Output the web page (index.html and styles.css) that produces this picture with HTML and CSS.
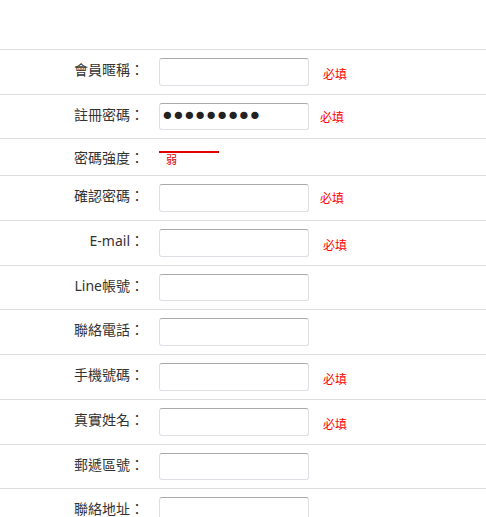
FILE: index.html
```html
<!DOCTYPE html>
<html lang="zh-Hant">
<head>
<meta charset="utf-8">
<title>會員註冊</title>
<link rel="stylesheet" href="styles.css">
</head>
<body>
<form class="form">
  <div class="row">
    <label class="label">會員暱稱：</label>
    <input class="field" type="text">
    <span class="note">必填</span>
  </div>
  <div class="row">
    <label class="label">註冊密碼：</label>
    <input class="field field-pass" type="password" value="123456789">
    <span class="note note-tight">必填</span>
  </div>
  <div class="row row-strength">
    <label class="label">密碼強度：</label>
    <div class="strength">
      <div class="strength-bar"></div>
      <span class="strength-text">弱</span>
    </div>
  </div>
  <div class="row">
    <label class="label">確認密碼：</label>
    <input class="field" type="password">
    <span class="note note-tight">必填</span>
  </div>
  <div class="row">
    <label class="label">E-mail：</label>
    <input class="field" type="text">
    <span class="note">必填</span>
  </div>
  <div class="row">
    <label class="label">Line帳號：</label>
    <input class="field" type="text">
  </div>
  <div class="row">
    <label class="label">聯絡電話：</label>
    <input class="field" type="text">
  </div>
  <div class="row">
    <label class="label">手機號碼：</label>
    <input class="field" type="text">
    <span class="note">必填</span>
  </div>
  <div class="row">
    <label class="label">真實姓名：</label>
    <input class="field" type="text">
    <span class="note">必填</span>
  </div>
  <div class="row">
    <label class="label">郵遞區號：</label>
    <input class="field" type="text">
  </div>
  <div class="row">
    <label class="label">聯絡地址：</label>
    <input class="field" type="text">
  </div>
</form>
</body>
</html>
```

FILE: styles.css
```css
html, body {
  margin: 0;
  padding: 0;
  background: #fff;
}

body {
  font-family: "Noto Sans", "Noto Sans CJK TC", sans-serif;
  color: #333;
  font-size: 14px;
}

.form {
  margin-top: 49px;
  border-top: 1px solid #ddd;
}

.row {
  display: flex;
  align-items: flex-start;
  padding: 8px 0;
  border-bottom: 1px solid #ddd;
  height: 27.7px;
}

.label {
  width: 144px;
  flex: none;
  text-align: right;
  line-height: 20px;
  padding-top: 2px;
  font-size: 14px;
  color: #333;
}

.field {
  flex: none;
  box-sizing: border-box;
  width: 150px;
  height: 27.7px;
  margin: 0 0 0 15px;
  padding: 0 2px;
  border: 1px solid #dcdfe4;
  border-top-color: #a9a9a9;
  border-radius: 3px;
  background: #fff;
  font-family: "DejaVu Sans", sans-serif;
  font-size: 13px;
  color: #222;
  outline: none;
}

.field-pass {
  font-size: 25px;
  letter-spacing: -3.8px;
  padding: 0 0 0 0;
  color: #222;
}

.note {
  margin-left: 14px;
  margin-top: 8px;
  font-size: 12px;
  line-height: 16px;
  color: #f00;
  font-family: "Noto Sans CJK TC", sans-serif;
}

.note-tight {
  margin-left: 11px;
  margin-top: 6px;
}

.row-strength {
  height: 20px;
}

.row-strength .label {
  padding-top: 1px;
}

.strength {
  margin-left: 15px;
  padding-top: 4px;
  display: flex;
  flex-direction: column;
}

.strength-bar {
  width: 60px;
  height: 2px;
  background: #e00000;
}

.strength-text {
  margin-left: 7px;
  font-size: 11px;
  line-height: 12px;
  color: #e00000;
  font-family: "Noto Sans CJK TC", sans-serif;
}
```
